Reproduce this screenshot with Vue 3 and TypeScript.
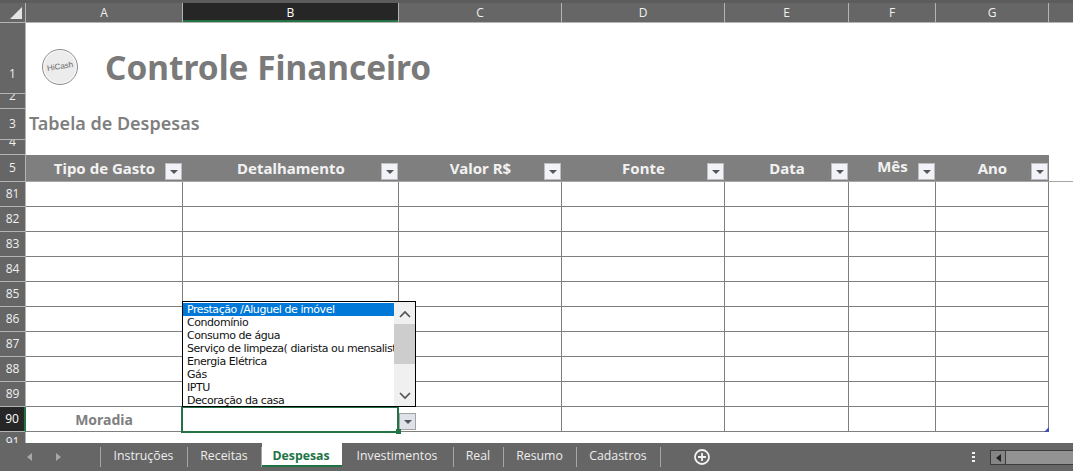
<script setup lang="ts">
import { ref } from 'vue';

const columns = ['A', 'B', 'C', 'D', 'E', 'F', 'G'];
const headers = ['Tipo de Gasto', 'Detalhamento', 'Valor R$', 'Fonte', 'Data', 'Mês', 'Ano'];
const rowNumbers = [81, 82, 83, 84, 85, 86, 87, 88, 89];
const options = [
  'Prestação /Aluguel de imóvel',
  'Condomínio',
  'Consumo de água',
  'Serviço de limpeza( diarista ou mensalista)',
  'Energia Elétrica',
  'Gás',
  'IPTU',
  'Decoração da casa'
];
const tabs = [
  { name: 'Instruções', width: 87 },
  { name: 'Receitas', width: 74 },
  { name: 'Despesas', width: 80 },
  { name: 'Investimentos', width: 112 },
  { name: 'Real', width: 50 },
  { name: 'Resumo', width: 73 },
  { name: 'Cadastros', width: 84 }
];
const activeTab = ref('Despesas');
</script>

<template>
  <div class="excel">
    <div class="grid-row col-head">
      <div class="corner"><span class="corner-mark"></span></div>
      <div v-for="c in columns" :key="c" class="col-label" :class="{ active: c === 'B' }">{{ c }}</div>
      <div class="col-label last"></div>
    </div>

    <div class="free-row row-1">
      <div class="row-label lbl-low">1</div>
      <div class="title-wrap">
        <div class="logo"><span>HiCash</span></div>
        <h1 class="title">Controle Financeiro</h1>
      </div>
    </div>
    <div class="free-row row-2">
      <div class="row-label lbl-cut">2</div>
    </div>
    <div class="free-row row-3">
      <div class="row-label">3</div>
      <h2 class="subtitle">Tabela de Despesas</h2>
    </div>
    <div class="free-row row-4">
      <div class="row-label lbl-cut">4</div>
    </div>

    <div class="grid-row table-head">
      <div class="row-label">5</div>
      <div v-for="h in headers" :key="h" class="th" :class="{ raised: h === 'Mês' }">
        <span>{{ h }}</span>
        <span class="filter"><i></i></span>
      </div>
      <div class="th-rest"></div>
    </div>

    <div v-for="n in rowNumbers" :key="n" class="grid-row data-row">
      <div class="row-label">{{ n }}</div>
      <div v-for="c in columns" :key="c" class="cell"></div>
    </div>

    <div class="grid-row data-row">
      <div class="row-label active">90</div>
      <div class="cell moradia">Moradia</div>
      <div class="cell selected">
        <span class="handle"></span>
        <span class="cell-drop"><i></i></span>
        <div class="list">
          <div class="list-items">
            <div v-for="(o, i) in options" :key="o" class="item" :class="{ on: i === 0 }">{{ o }}</div>
          </div>
          <div class="scroll">
            <svg class="chev" width="14" height="8" viewBox="0 0 14 8"><path d="M2 7 L7 2 L12 7" /></svg>
            <div class="thumb"></div>
            <svg class="chev down" width="14" height="8" viewBox="0 0 14 8"><path d="M2 1 L7 6 L12 1" /></svg>
          </div>
        </div>
      </div>
      <div v-for="c in columns.slice(2)" :key="c" class="cell" :class="{ 'range-end': c === 'G' }"></div>
    </div>

    <div class="free-row row-91">
      <div class="row-label lbl-91">91</div>
    </div>

    <div class="tabbar">
      <div class="nav">
        <svg width="6" height="8" viewBox="0 0 6 8"><path d="M5 0 V8 L0 4 Z" /></svg>
        <svg width="6" height="8" viewBox="0 0 6 8"><path d="M1 0 V8 L6 4 Z" /></svg>
      </div>
      <div class="tabs">
        <div
          v-for="t in tabs"
          :key="t.name"
          class="tab"
          :class="{ current: t.name === activeTab }"
          :style="{ width: t.width + 'px' }"
        >{{ t.name }}</div>
      </div>
      <svg class="add" width="18" height="18" viewBox="0 0 18 18">
        <circle cx="9" cy="9" r="7" />
        <path d="M9 5 V13 M5 9 H13" />
      </svg>
      <div class="dots"><i></i><i></i><i></i></div>
      <div class="hscroll">
        <span class="hbtn"><svg width="5" height="8" viewBox="0 0 5 8"><path d="M5 0 V8 L0 4 Z" /></svg></span>
        <span class="hthumb"></span>
      </div>
    </div>
  </div>
</template>

<style scoped>
.excel {
  width: 1073px;
  height: 471px;
  overflow: hidden;
  background: #fff;
  font-family: "Noto Sans", sans-serif;
  display: flex;
  flex-direction: column;
}

.grid-row {
  display: grid;
  grid-template-columns: 26px 157px 216px 163px 163px 124px 87px 113px 24px;
  grid-template-rows: minmax(0, 1fr);
  flex: none;
}

.free-row {
  display: flex;
  flex: none;
}

.col-head {
  height: 23px;
  box-sizing: border-box;
  padding-top: 3px;
  background: #666;
  border-bottom: 1px solid #b4b4b4;
  box-shadow: inset 0 3px 0 #5c5c5c;
}

.corner {
  border-right: 1px solid #b4b4b4;
  position: relative;
}

.corner-mark {
  position: absolute;
  left: 10px;
  top: 4px;
  width: 0;
  height: 0;
  border-style: solid;
  border-width: 0 0 12px 12px;
  border-color: transparent transparent #e4e4e4 transparent;
}

.col-label {
  color: #f0f0f0;
  font: 12px/19px "Open Sans", sans-serif;
  text-align: center;
  border-right: 1px solid #b4b4b4;
}

.col-label.active {
  background: #262626;
  color: #fff;
  box-shadow: inset 0 -2px 0 #217346;
}

.col-label.last {
  border-right: 0;
}

.row-label {
  flex: none;
  width: 26px;
  box-sizing: border-box;
  background: #666;
  color: #f0f0f0;
  font: 12px/16px "Open Sans", sans-serif;
  border-right: 1px solid #b4b4b4;
  border-bottom: 1px solid #b4b4b4;
  display: flex;
  align-items: center;
  justify-content: center;
  overflow: hidden;
}

.row-label.active {
  background: #262626;
  color: #fff;
  border-right: 2px solid #217346;
}

.lbl-low {
  align-items: flex-end;
  padding-bottom: 11px;
}

.lbl-cut {
  align-items: flex-start;
  line-height: 4px;
}

.lbl-91 {
  align-items: flex-start;
  padding-top: 2px;
  border-bottom: 0;
}

.row-1 { height: 71px; }
.row-2 { height: 15px; }
.row-3 { height: 31px; }
.row-4 { height: 15px; }
.row-91 { height: 11px; }

.title-wrap {
  display: flex;
  align-items: center;
  padding: 16px 0 0 16px;
}

.logo {
  flex: none;
  width: 36px;
  height: 36px;
  box-sizing: border-box;
  border-radius: 50%;
  border: 1px solid #8c8c8c;
  background: #ececec;
  box-shadow: inset 0 0 0 1px #fafafa;
  display: flex;
  align-items: center;
  justify-content: center;
  margin-right: 27px;
}

.logo span {
  font: 8px/1 "Liberation Sans", sans-serif;
  color: #666;
  transform: rotate(-9deg);
}

.title {
  margin: 0;
  font-size: 33.4px;
  line-height: 44px;
  font-weight: 700;
  color: #7a7a7a;
  white-space: nowrap;
}

.subtitle {
  margin: 0 0 0 3px;
  font-size: 18px;
  line-height: 28px;
  font-weight: 600;
  color: #7f7f7f;
  white-space: nowrap;
}

.table-head {
  height: 27px;
}

.th {
  position: relative;
  background: #7f7f7f;
  color: #f2f2f2;
  font-size: 15px;
  font-weight: 700;
  border-bottom: 1px solid #a6a6a6;
  display: flex;
  align-items: center;
  justify-content: center;
  white-space: nowrap;
}

.th.raised > span:first-child {
  margin-bottom: 5px;
}

.th-rest {
  border-bottom: 1px solid #a6a6a6;
}

.filter,
.cell-drop {
  position: absolute;
  box-sizing: border-box;
  display: flex;
  align-items: center;
  justify-content: center;
}

.filter {
  right: 1px;
  top: 8px;
  width: 17px;
  height: 17px;
  background: #f1f3f8;
  border: 1px solid #bdbdbd;
}

.filter i,
.cell-drop i {
  width: 0;
  height: 0;
  border-style: solid;
  border-width: 4px 4px 0;
  border-color: #555 transparent transparent;
}

.data-row {
  height: 25px;
}

.cell {
  position: relative;
  box-sizing: border-box;
  border-right: 1px solid #7f7f7f;
  border-bottom: 1px solid #7f7f7f;
}

.moradia {
  color: #7f7f7f;
  font-size: 14px;
  font-weight: 700;
  display: flex;
  align-items: center;
  justify-content: center;
}

.selected::before {
  content: "";
  position: absolute;
  left: -2px;
  top: -1px;
  right: -1px;
  bottom: -2px;
  border: 2px solid #217346;
}

.handle {
  position: absolute;
  right: -3px;
  bottom: -3px;
  width: 5px;
  height: 5px;
  background: #217346;
  z-index: 1;
}

.cell-drop {
  left: 216px;
  top: 6px;
  width: 17px;
  height: 17px;
  background: #dfe2e9;
  border: 1px solid #a3a3a3;
}

.list {
  position: absolute;
  left: -1px;
  bottom: 24px;
  width: 234px;
  height: 106px;
  box-sizing: border-box;
  background: #fff;
  border: 1px solid #000;
  display: flex;
  z-index: 2;
}

.list-items {
  flex: 1;
  min-width: 0;
  overflow: hidden;
  padding-top: 1px;
}

.item {
  height: 13px;
  padding-left: 4px;
  font: 11px/13px "DejaVu Sans", sans-serif;
  letter-spacing: -0.44px;
  color: #111;
  white-space: nowrap;
  overflow: hidden;
}

.item.on {
  background: #0078d7;
  color: #fff;
}

.scroll {
  flex: none;
  width: 21px;
  background: #f0f0f0;
  display: flex;
  flex-direction: column;
  align-items: center;
}

.chev {
  flex: none;
  margin-top: 8px;
}

.chev path {
  fill: none;
  stroke: #505050;
  stroke-width: 1.6;
}

.chev.down {
  margin-top: 28px;
}

.thumb {
  flex: none;
  width: 100%;
  height: 40px;
  margin-top: 6px;
  background: #cdcdcd;
}

.range-end::after {
  content: "";
  position: absolute;
  right: -1px;
  bottom: -1px;
  width: 0;
  height: 0;
  border-style: solid;
  border-width: 0 0 5px 5px;
  border-color: transparent transparent #3f51b5 transparent;
}

.tabbar {
  flex: none;
  height: 29px;
  box-sizing: border-box;
  background: #666;
  border-bottom: 1px solid #4a4a4a;
  display: flex;
  align-items: flex-start;
  position: relative;
}

.nav {
  width: 101px;
  flex: none;
  height: 20px;
  margin-top: 4px;
  box-sizing: border-box;
  padding-left: 27px;
  display: flex;
  align-items: center;
  gap: 22px;
  border-right: 1px solid #a6a6a6;
}

.nav svg path {
  fill: #a8a8a8;
}

.tabs {
  display: flex;
  height: 24px;
}

.tab {
  box-sizing: border-box;
  height: 24px;
  padding-right: 2px;
  text-align: center;
  font: 12.3px/25px "Open Sans", sans-serif;
  color: #ededed;
  white-space: nowrap;
  position: relative;
}

.tab::after {
  content: "";
  position: absolute;
  right: 0;
  top: 4px;
  bottom: 0;
  width: 1px;
  background: #a6a6a6;
}

.tab.current {
  background: #fff;
  color: #217346;
  font-weight: 700;
  border-bottom: 2px solid #217346;
}

.tab.current::after {
  display: none;
}

.add {
  margin: 5px 0 0 32px;
  flex: none;
}

.add circle,
.add path {
  fill: none;
  stroke: #f2f2f2;
  stroke-width: 1.8;
}

.dots {
  position: absolute;
  left: 972px;
  top: 9px;
  display: flex;
  flex-direction: column;
  gap: 2px;
}

.dots i {
  display: block;
  width: 3px;
  height: 2px;
  background: #f2f2f2;
}

.hscroll {
  position: absolute;
  left: 990px;
  top: 7px;
  right: 0;
  height: 15px;
  box-sizing: border-box;
  border: 1px solid #3c3c3c;
  border-right: 0;
  display: flex;
}

.hbtn {
  flex: none;
  width: 14px;
  border-right: 1px solid #3c3c3c;
  background: #858585;
  display: flex;
  align-items: center;
  justify-content: center;
}

.hbtn path {
  fill: #222;
}

.hthumb {
  flex: 1;
  background: #929292;
}
</style>
